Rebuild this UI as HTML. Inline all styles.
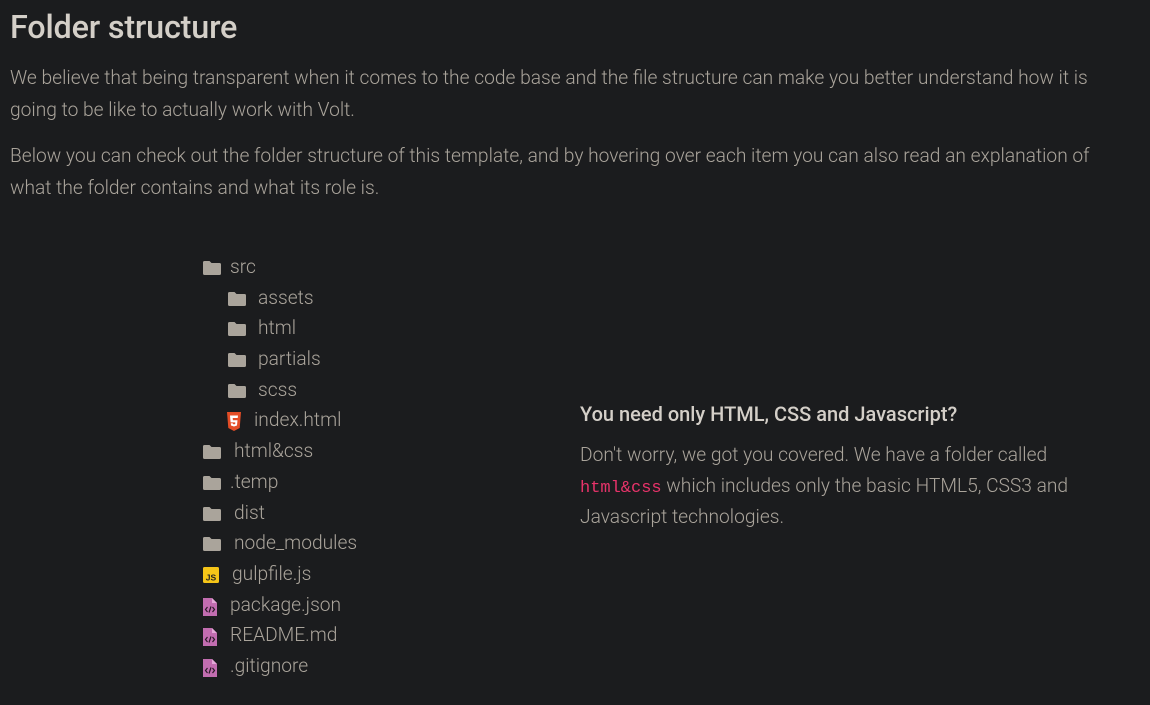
<!DOCTYPE html>
<html><head><meta charset="utf-8"><style>
body{margin:0;background:#1b1c1e;width:1150px;height:705px;overflow:hidden;font-family:"Roboto","Liberation Sans",sans-serif;color:#aaa49b;}
h1{position:absolute;left:10px;top:8px;margin:0;font-size:32.4px;font-weight:500;color:#d4cfc8;letter-spacing:-0.2px}
p.t{position:absolute;left:10px;margin:0;font-size:19.2px;line-height:32px;font-weight:300;white-space:nowrap}
.row{position:absolute;height:20px;font-size:19.2px;font-weight:300;line-height:20px;white-space:nowrap}
.row svg{position:absolute;top:0}
.row span{position:absolute;top:0}
h4{position:absolute;left:580px;top:402px;margin:0;font-size:20px;font-weight:500;color:#d4cfc8}
code{font-family:"Liberation Mono",monospace;color:#e8336a;font-size:17px;line-height:0}
</style></head><body>
<h1>Folder structure</h1>
<p class="t" style="top:62px">We believe that being transparent when it comes to the code base and the file structure can make you better understand how it is<br>going to be like to actually work with Volt.</p>
<p class="t" style="top:140px">Below you can check out the folder structure of this template, and by hovering over each item you can also read an explanation of<br>what the folder contains and what its role is.</p>

<div id="tree"></div>
<script>
var F='<svg width="20" height="16" viewBox="0 0 20 16"><path d="M1 2.5Q1 1 2.5 1H7.5L9.5 3H17.5Q19 3 19 4.5V13.5Q19 15 17.5 15H2.5Q1 15 1 13.5Z" fill="#aaa49b"/></svg>';
var H='<svg width="16" height="19" viewBox="0 0 16 19"><path d="M1 0H15L13.7 16L8 19L2.3 16Z" fill="#e44d26"/><path d="M4 3.5H12L11.7 6H6.7L6.9 8.3H11.5L11 13.5L8 14.5L5 13.5L4.8 11.2H6.8L6.9 12L8 12.4L9.2 12L9.3 10.4H4.6Z" fill="#fff"/></svg>';
var J='<svg width="18" height="18" viewBox="0 0 18 18"><rect x="1" y="1" width="16" height="16" rx="1.5" fill="#f5c518"/><text x="9" y="14.5" font-family="Liberation Sans" font-weight="bold" font-size="8.5" text-anchor="middle" fill="#222">JS</text></svg>';
var C='<svg width="16" height="20" viewBox="0 0 16 20"><path d="M1 1H10L15 6V19H1Z" fill="#c26db0"/><path d="M10 1V6H15" fill="#e4a9d8"/><path d="M5.5 10L3.5 12.5L5.5 15M10.5 10L12.5 12.5L10.5 15M9 9.5L7 15.5" stroke="#2a1a27" stroke-width="1.2" fill="none"/></svg>';
var rows=[[F,202,230,'src',260],[F,227,258,'assets',291],[F,227,258,'html',321],[F,227,258,'partials',352],[F,227,258,'scss',383],[H,226,254,'index.html',413],
[F,202,234,'html&amp;css',444],[F,202,230,'.temp',475],[F,202,234,'dist',506],[F,202,234,'node_modules',536],[J,202,232,'gulpfile.js',567],[C,202,230,'package.json',598],[C,202,230,'README.md',628],[C,202,230,'.gitignore',659]];
var h='';rows.forEach(function(r){h+='<div class="row" style="left:0;top:'+(r[4]-1)+'px;width:600px"><svg style="left:'+r[1]+'px;top:'+(r[0]==F?1:0)+'px" '+r[0].slice(5)+'<span style="left:'+r[2]+'px;top:-2px">'+r[3]+'</span></div>';});
document.getElementById('tree').innerHTML=h;
</script>
<h4>You need only HTML, CSS and Javascript?</h4>
<p class="t" style="left:580px;top:439px;line-height:31px">Don't worry, we got you covered. We have a folder called<br><code>html&amp;css</code> which includes only the basic HTML5, CSS3 and<br>Javascript technologies.</p>
</body></html>
